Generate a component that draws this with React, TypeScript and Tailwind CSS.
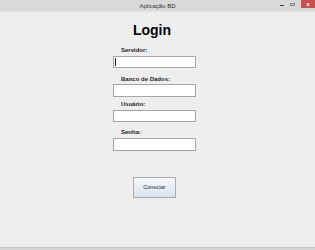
import React from 'react';

/**
 * "Aplicação BD" login window — a small Swing-style form: window chrome,
 * title, four labelled text fields and a connect button.
 */
const fields = [
  { label: 'Servidor:', labelMt: 'mt-[9px]', inputMt: 'mt-[2px]', h: 'h-[12px]', caret: true },
  { label: 'Banco de Dados:', labelMt: 'mt-[7px]', inputMt: 'mt-[1px]', h: 'h-[13px]', caret: false },
  { label: 'Usuário:', labelMt: 'mt-[3px]', inputMt: 'mt-[2px]', h: 'h-[12px]', caret: false },
  { label: 'Senha:', labelMt: 'mt-[6px]', inputMt: 'mt-[2px]', h: 'h-[13px]', caret: false },
];

export default function App() {
  return (
    <div className="flex h-[250px] w-[315px] flex-col bg-[#eeeeee] font-['Liberation_Sans',Arial,sans-serif]">
      {/* title bar */}
      <div className="relative flex h-[12px] items-center justify-center border-b border-[#e4e4e4] bg-[#d9d9d9]">
        <span className="text-[6px] leading-none text-[#333]">Aplicação BD</span>
        <div className="absolute right-0 top-0 flex items-start">
          <span className="mr-[6px] mt-[5px] h-[1px] w-[4px] bg-[#333]" />
          <span className="mr-[6px] mt-[3px] h-[3px] w-[5px] border border-[#888]" />
          <span className="flex h-[8px] w-[14px] items-center justify-center bg-[#c75050] text-[6px] font-bold leading-none text-white">
            x
          </span>
        </div>
      </div>

      <div className="flex flex-1 flex-col pl-[113px]">
        <div className="mt-[11px] w-[83px] pr-[5px] text-center text-[14px] font-bold leading-[14px] text-black">
          Login
        </div>

        {fields.map((f) => (
          <React.Fragment key={f.label}>
            <div className={`${f.labelMt} h-[8px] pl-[8px] text-[6px] font-bold leading-[8px] text-[#222]`}>
              {f.label}
            </div>
            <div className={`${f.inputMt} ${f.h} relative w-[83px] border border-[#a6a6a6] bg-white`}>
              {f.caret && <span className="absolute left-[1px] top-[1px] h-[8px] w-[1px] bg-[#222]" />}
            </div>
          </React.Fragment>
        ))}

        <button className="ml-[20px] mt-[26px] h-[21px] w-[43px] border border-[#acacac] bg-gradient-to-b from-[#f7f9fb] to-[#d9e3ee] text-[5.5px] leading-none text-[#1c2a3c]">
          Conectar
        </button>
      </div>

      <div className="h-[3px] border-t border-[#c8c8c8] bg-[#d4d4d4]" />
    </div>
  );
}
